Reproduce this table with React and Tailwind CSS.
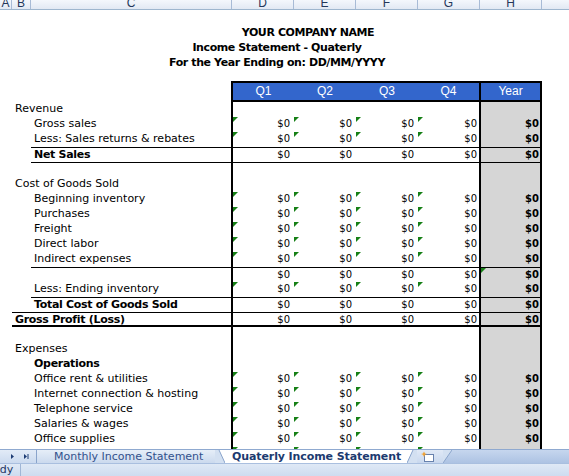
import React from "react";

const TRI =
  "absolute left-0 top-0 h-0 w-0 border-t-[5px] border-r-[5px] border-t-[#168016] border-r-transparent";

const rows = [
  { label: "Revenue", lvl: "b" },
  { label: "Gross sales", lvl: "c", v: true, tri: true },
  { label: "Less: Sales returns & rebates", lvl: "c", v: true, tri: true },
  { label: "Net Sales", lvl: "c", bold: true, v: true, top: true },
  { lvl: "c", top: true },
  { label: "Cost of Goods Sold", lvl: "b" },
  { label: "Beginning inventory", lvl: "c", v: true, tri: true },
  { label: "Purchases", lvl: "c", v: true, tri: true },
  { label: "Freight", lvl: "c", v: true, tri: true },
  { label: "Direct labor", lvl: "c", v: true, tri: true },
  { label: "Indirect expenses", lvl: "c", v: true, tri: true },
  { lvl: "c", v: true, top: true, hTri: true },
  { label: "Less: Ending inventory", lvl: "c", v: true, tri: true },
  { label: "Total Cost of Goods Sold", lvl: "c", bold: true, v: true, top: true },
  { label: "Gross Profit (Loss)", lvl: "b", bold: true, v: true, top: true, thick: true },
  { lvl: "b" },
  { label: "Expenses", lvl: "b" },
  { label: "Operations", lvl: "c", bold: true },
  { label: "Office rent & utilities", lvl: "c", v: true, tri: true },
  { label: "Internet connection & hosting", lvl: "c", v: true, tri: true },
  { label: "Telephone service", lvl: "c", v: true, tri: true },
  { label: "Salaries & wages", lvl: "c", v: true, tri: true },
  { label: "Office supplies", lvl: "c", v: true, tri: true },
];

const colHeads = [
  ["A", "w-[12px]"],
  ["B", "w-[19px]"],
  ["C", "w-[201px]"],
  ["D", "w-[62px]"],
  ["E", "w-[62px]"],
  ["F", "w-[62px]"],
  ["G", "w-[62px]"],
  ["H", "w-[62px]"],
];

const SheetRow = ({ r }) => {
  const line = r.top ? "border-t border-t-black" : "";
  const thick = r.thick ? "border-b-2 border-b-black" : "";
  const val = r.v ? "$0" : "";
  return (
    <div className="flex h-[15px] shrink-0 leading-[14px]">
      <div className="flex w-[231px] shrink-0">
        <div className={r.lvl === "c" ? "w-[31px] shrink-0" : "w-[12px] shrink-0"} />
        <div
          className={`flex-1 overflow-hidden whitespace-nowrap pl-[3px] text-[11px] ${line} ${thick} ${
            r.bold ? "font-bold tracking-[-0.3px]" : ""
          }`}
        >
          {r.label}
        </div>
      </div>
      <div className={`relative w-[63px] shrink-0 border-l-2 border-l-black pr-[4px] text-right text-[10px] ${line} ${thick}`}>
        {r.tri && <span className={TRI} />}
        {val}
      </div>
      <div className={`relative w-[62px] shrink-0 pr-[4px] text-right text-[10px] ${line} ${thick}`}>
        {r.tri && <span className={TRI} />}
        {val}
      </div>
      <div className={`relative w-[62px] shrink-0 pr-[4px] text-right text-[10px] ${line} ${thick}`}>
        {r.tri && <span className={TRI} />}
        {val}
      </div>
      <div className={`relative w-[61px] shrink-0 pr-[2px] text-right text-[10px] ${line} ${thick}`}>
        {r.tri && <span className={TRI} />}
        {val}
      </div>
      <div
        className={`relative w-[63px] shrink-0 border-x-2 border-x-black bg-[#d6d6d6] pr-[1px] text-right text-[10px] font-bold ${line} ${thick}`}
      >
        {r.hTri && <span className={TRI} />}
        {val}
      </div>
    </div>
  );
};

// last row, only its top two pixels show above the tabs
const PartialRow = () => (
  <div className="flex h-[2px] shrink-0">
    <div className="w-[231px] shrink-0" />
    <div className="relative w-[63px] shrink-0 border-l-2 border-l-black">
      <span className={TRI} />
    </div>
    <div className="relative w-[62px] shrink-0">
      <span className={TRI} />
    </div>
    <div className="relative w-[62px] shrink-0">
      <span className={TRI} />
    </div>
    <div className="relative w-[61px] shrink-0">
      <span className={TRI} />
    </div>
    <div className="w-[63px] shrink-0 border-x-2 border-x-black bg-[#d6d6d6]" />
  </div>
);

const TabBar = () => (
  <div className="flex h-[14px] shrink-0 border-t border-t-[#8fa9d0] bg-gradient-to-b from-[#c6d6ee] to-[#adc3e3] text-[11px] leading-[13px]">
    <div className="flex w-[37px] shrink-0 items-center border-r border-r-[#8aa4cb] bg-gradient-to-b from-[#e2ebf7] to-[#cbdaef]">
      <svg width="36" height="13" viewBox="0 0 36 13">
        <polygon points="11,4 14,6.5 11,9" fill="#1d3c74" />
        <polygon points="24,4 27,6.5 24,9" fill="#1d3c74" />
        <rect x="27.5" y="4" width="1" height="5" fill="#1d3c74" />
      </svg>
    </div>
    <div className="w-[178px] shrink-0 whitespace-nowrap bg-gradient-to-b from-[#e6eef8] to-[#cbdaee] pl-[17px] text-[#32518c]">
      Monthly Income Statement
    </div>
    <svg width="10" height="13" viewBox="0 0 10 13" className="shrink-0">
      <polygon points="0,0 4,0 10,13 0,13" fill="#d3e0f1" />
      <polygon points="4,0 10,0 10,13" fill="#ffffff" />
      <line x1="4" y1="0" x2="10" y2="13" stroke="#8aa4cb" strokeWidth="1" />
    </svg>
    <div className="w-[182px] shrink-0 whitespace-nowrap bg-white pl-[7px] font-bold tracking-[-0.1px] text-[#1c3a70]">
      Quaterly Income Statement
    </div>
    <svg width="10" height="13" viewBox="0 0 10 13" className="shrink-0">
      <polygon points="0,0 6,0 0,13" fill="#ffffff" />
      <polygon points="6,0 10,0 10,13 0,13" fill="#d3e0f1" />
      <line x1="6" y1="0" x2="0" y2="13" stroke="#8aa4cb" strokeWidth="1" />
    </svg>
    <div className="flex w-[26px] shrink-0 items-center bg-gradient-to-b from-[#e0e9f6] to-[#c9d8ee] pl-[3px]">
      <svg width="16" height="12" viewBox="0 0 16 12">
        <rect x="4.5" y="3.5" width="9" height="7" fill="#ffffff" stroke="#6781ad" />
        <path d="M4 0.5 L5 2.5 L7 3 L5 3.8 L4 6 L3 3.8 L1 3 L3 2.5 Z" fill="#f0a030" />
      </svg>
    </div>
    <svg width="9" height="13" viewBox="0 0 9 13" className="shrink-0">
      <polygon points="0,0 9,0 0,13" fill="#d3e0f1" />
      <line x1="9" y1="0" x2="0" y2="13" stroke="#8aa4cb" strokeWidth="1" />
    </svg>
    <div className="flex-1" />
  </div>
);

export default function App() {
  return (
    <div className="flex h-[476px] w-[569px] flex-col overflow-hidden bg-white font-['DejaVu_Sans',sans-serif] text-black">
      <div className="flex h-[449px] shrink-0 flex-col overflow-hidden">
        <div className="flex h-[10px] shrink-0 overflow-hidden border-b border-b-[#9eb6ce] bg-gradient-to-b from-[#f4f7fc] to-[#e2e9f3] font-['Liberation_Sans',sans-serif] text-[12px] leading-[10px] text-[#24375a]">
          {colHeads.map(([l, w]) => (
            <div key={l} className={`${w} shrink-0 border-r border-r-[#a8bbd6] text-center`}>
              <div className="-mt-[2px]">{l}</div>
            </div>
          ))}
          <div className="flex-1" />
        </div>
        <div className="h-[15px] shrink-0" />
        <div className="flex h-[15px] shrink-0 text-[11px] font-bold leading-[15px] tracking-[-0.4px]">
          <div className="ml-[74px] w-[468px] text-center">YOUR COMPANY NAME</div>
        </div>
        <div className="flex h-[15px] shrink-0 text-[11px] font-bold leading-[15px] tracking-[-0.4px]">
          <div className="ml-[12px] w-[530px] text-center">Income Statement - Quaterly</div>
        </div>
        <div className="flex h-[15px] shrink-0 text-[11px] font-bold leading-[15px] tracking-[-0.4px]">
          <div className="ml-[12px] w-[530px] text-center">For the Year Ending on: DD/MM/YYYY</div>
        </div>
        <div className="h-[11px] shrink-0" />
        <div className="flex h-[21px] shrink-0">
          <div className="w-[231px] shrink-0" />
          <div className="flex w-[311px] shrink-0 border-2 border-black bg-[#3366cc] font-['Liberation_Sans',sans-serif] text-[12px] leading-[17px] text-white">
            <div className="w-[61px] text-center">Q1</div>
            <div className="w-[62px] text-center">Q2</div>
            <div className="w-[62px] text-center">Q3</div>
            <div className="w-[61px] text-center">Q4</div>
            <div className="w-[61px] border-l-2 border-l-black text-center">Year</div>
          </div>
        </div>
        {rows.map((r, i) => (
          <SheetRow key={i} r={r} />
        ))}
        <PartialRow />
      </div>
      <TabBar />
      <div className="flex h-[13px] shrink-0 border-t border-t-[#a9bfdf] bg-gradient-to-b from-[#dfe9f6] to-[#cddcf0] text-[11px] leading-[12px] text-[#1d3563]">
        <div className="w-[21px] shrink-0 overflow-hidden border-r border-r-[#a0b6d6]">
          <span className="ml-[-21px] whitespace-nowrap">Ready</span>
        </div>
      </div>
    </div>
  );
}
